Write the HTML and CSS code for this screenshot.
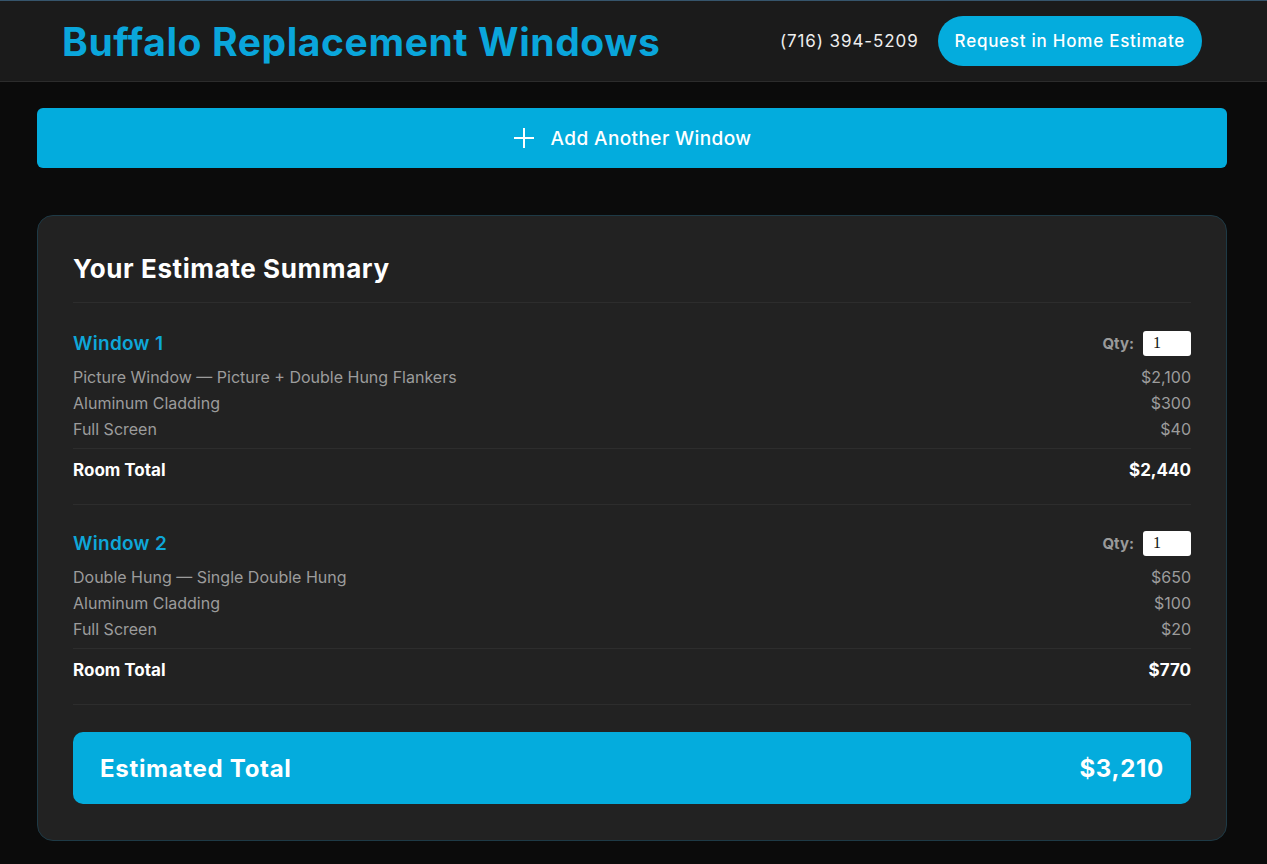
FILE: index.html
```html
<!DOCTYPE html>
<html>
<head>
  <title>Buffalo Replacement Windows - Estimate</title>
  <meta charset="UTF-8" />
  <link rel="stylesheet" href="styles.css">
</head>
<body>

  <header class="site-header">
    <div class="header-inner">
      <h1 class="brand">Buffalo Replacement Windows</h1>
      <div class="header-actions">
        <span class="phone">(716) 394-5209</span>
        <button class="btn-pill">Request in Home Estimate</button>
      </div>
    </div>
  </header>

  <main class="page">
    <button class="btn-add">
      <svg class="plus" width="22" height="22" viewBox="0 0 22 22">
        <path d="M11 1v20M1 11h20" stroke="#fff" stroke-width="2" fill="none" />
      </svg>
      Add Another Window
    </button>

    <section class="summary">
      <h2 class="summary-title">Your Estimate Summary</h2>

      <div class="window-block">
        <div class="window-head">
          <span class="window-name">Window 1</span>
          <label class="qty">Qty: <input type="text" value="1" /></label>
        </div>
        <div class="line"><span>Picture Window — Picture + Double Hung Flankers</span><span>$2,100</span></div>
        <div class="line"><span>Aluminum Cladding</span><span>$300</span></div>
        <div class="line"><span>Full Screen</span><span>$40</span></div>
        <div class="room-total"><span>Room Total</span><span>$2,440</span></div>
      </div>

      <div class="window-block">
        <div class="window-head">
          <span class="window-name">Window 2</span>
          <label class="qty">Qty: <input type="text" value="1" /></label>
        </div>
        <div class="line"><span>Double Hung — Single Double Hung</span><span>$650</span></div>
        <div class="line"><span>Aluminum Cladding</span><span>$100</span></div>
        <div class="line"><span>Full Screen</span><span>$20</span></div>
        <div class="room-total"><span>Room Total</span><span>$770</span></div>
      </div>

      <div class="grand-total">
        <span>Estimated Total</span>
        <span>$3,210</span>
      </div>
    </section>
  </main>

</body>
</html>
```

FILE: styles.css
```css
body {
  margin: 0;
  background: #0b0b0b;
  font-family: Inter, 'Noto Sans', sans-serif;
  color: white;
}

.site-header {
  background: #1b1b1b;
  border-top: 1px solid #36556c;
  border-bottom: 1px solid #2c2c2c;
}

.header-inner {
  padding: 0 65px 0 62px;
  height: 80px;
  display: flex;
  align-items: center;
  justify-content: space-between;
}

.brand {
  margin: 0;
  font-size: 39px;
  font-weight: 700;
  letter-spacing: 0.6px;
  color: #0aa6db;
}

.header-actions {
  display: flex;
  align-items: center;
  gap: 19px;
}

.phone {
  font-size: 17px;
  letter-spacing: 0.9px;
  color: #eee;
}

.btn-pill {
  height: 50px;
  padding: 0 17px;
  border: none;
  border-radius: 25px;
  background: #04acdd;
  color: white;
  font-family: inherit;
  font-size: 17px;
  font-weight: 500;
  letter-spacing: 0.75px;
  cursor: pointer;
}

.page {
  padding: 26px 40px 24px 37px;
}

.btn-add {
  width: 100%;
  height: 60px;
  border: none;
  border-radius: 6px;
  background: #03acdd;
  color: white;
  font-family: inherit;
  font-size: 19px;
  font-weight: 500;
  letter-spacing: 0.4px;
  display: flex;
  align-items: center;
  justify-content: center;
  gap: 16px;
  cursor: pointer;
}

.summary {
  margin-top: 47px;
  background: #222222;
  border: 1px solid #1e3a46;
  border-radius: 16px;
  padding: 36px 35px 36px;
}

.summary-title {
  margin: 0;
  font-size: 26px;
  font-weight: 700;
  letter-spacing: 0.6px;
  line-height: 34px;
  padding-bottom: 16px;
  border-bottom: 1px solid #2d2d2d;
  margin-bottom: 2px;
}

.window-block {
  padding-top: 24px;
  border-bottom: 1px solid #2d2d2d;
}

.window-head {
  height: 28px;
  display: flex;
  align-items: center;
  justify-content: space-between;
  margin-bottom: 7px;
}

.window-name {
  font-size: 19px;
  font-weight: 600;
  letter-spacing: 0.3px;
  color: #0ea7d9;
}

.qty {
  display: flex;
  align-items: center;
  gap: 9px;
  font-size: 15px;
  font-weight: 700;
  color: #9a9a9a;
}

.qty input {
  width: 38px;
  height: 25px;
  padding: 0 0 0 10px;
  border: none;
  border-radius: 3px;
  background: white;
  color: #111;
  font-family: 'Liberation Serif', serif;
  font-size: 16px;
}

.line {
  display: flex;
  justify-content: space-between;
  line-height: 26px;
  font-size: 16px;
  color: #9c9c9c;
}

.line:nth-of-type(4) {
  padding-bottom: 6px;
  border-bottom: 1px solid #2d2d2d;
}

.room-total {
  display: flex;
  justify-content: space-between;
  font-size: 17px;
  font-weight: 700;
  line-height: 22px;
  padding: 10px 0 23px;
}

.grand-total {
  margin-top: 27px;
  height: 72px;
  border-radius: 10px;
  background: #04acdd;
  display: flex;
  align-items: center;
  justify-content: space-between;
  padding: 0 27px;
  font-size: 24px;
  font-weight: 700;
  letter-spacing: 0.7px;
}
```
